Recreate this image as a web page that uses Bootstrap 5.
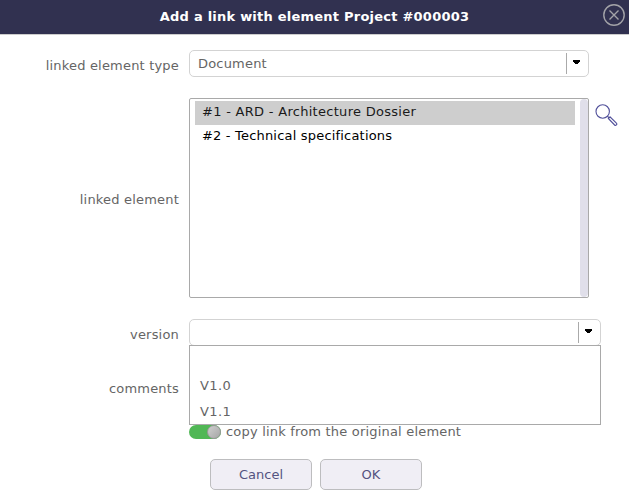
<!DOCTYPE html>
<html lang="en">
<head>
<meta charset="utf-8">
<meta name="viewport" content="width=device-width, initial-scale=1">
<title>Add a link</title>
<link href="https://cdn.jsdelivr.net/npm/bootstrap@5.3.0/dist/css/bootstrap.min.css" rel="stylesheet">
<style>
body{font-family:Verdana,"DejaVu Sans",sans-serif;font-size:13px;line-height:20px;letter-spacing:.19px;color:#656565;background:#fff;overflow:hidden}
.dlg-head{height:35px;background:#313150;border-bottom:1px solid #ccc;font-size:13px;letter-spacing:.23px}
.dlg-close{right:4px;top:4px;width:22px;height:22px}
.field-label{width:179px;margin-right:10px}
.row-first{margin-top:15px}
.row-next{margin-top:21px}
.label-list{padding-top:3px}
.combo{width:400px;height:27px;border:1px solid #d3d3d3;border-radius:5px;padding-left:8px}
.combo-wide{width:412px}
.combo-arrow{width:22px;height:21px;border-left:1px solid #aaa;padding-left:5px}
.combo-arrow svg{margin-top:7px}
.pick-list{width:400px;height:200px;border:1px solid #a9a9a9;border-radius:2px;color:#000;padding:0 0 0 5px}
.pick-items{padding-top:2px}
.pick-item{width:380px;height:24px;line-height:22px;padding-left:7px}
.pick-item.chosen{background:#cecece;color:#1a1a1a;letter-spacing:.29px}
.pick-bar{width:8px;background:#e0dfea;border-radius:4px}
.search-icon{margin:5px 0 0 5px}
.versions{left:0;top:26px;width:412px;height:80px;border:1px solid #a9a9a9;padding-left:10px;letter-spacing:.4px;z-index:2}
.versions div{height:26px;line-height:27px}
.comments-row{margin-top:33px;height:46px}
.copy-row{margin-left:189px;height:14px}
.copy-text{margin-left:5px}
.toggle{width:32px;height:14px;border-radius:7px;background:#50b755}
.toggle span{width:14px;height:14px;border-radius:50%;border:1px solid #999;background:linear-gradient(135deg,#cfcfcf,#a6a6a6)}
.actions{margin:20px 0 0 210px}
.dlg-btn{width:102px;height:31px;border:1px solid #bdbdbf;border-radius:5px;background:#f0eef5;color:#545381;font-size:13px;line-height:20px;letter-spacing:0;padding:0}
.dlg-btn:hover{background:#e5e3ee}
</style>
<script src="https://cdn.jsdelivr.net/npm/bootstrap@5.3.0/dist/js/bootstrap.bundle.min.js"></script>
</head>
<body>
<header class="dlg-head d-flex align-items-center justify-content-center text-white fw-bold position-relative">
  <span class="dlg-title">Add a link with element Project #000003</span>
  <svg class="dlg-close position-absolute" viewBox="0 0 22 22" fill="none" stroke="#a3a3a8"><circle cx="11" cy="11" r="10.2" stroke-width="1.4"/><path d="M6.5 6.5l9 9M15.500 6.500l-9 9" stroke-width="1.4"/></svg>
</header>
<main>
  <div class="d-flex row-first">
    <div class="field-label text-end pt-1 mt-1 lh-sm">linked element type</div>
    <div class="combo d-flex align-items-center justify-content-between"><span>Document</span>
      <span class="combo-arrow d-flex align-items-start"><svg width="9" height="5" viewBox="0 0 9 5" shape-rendering="crispEdges"><path d="M1 0h7v1h-7zM1 1h7v1h-7zM2 2h5v1h-5zM3 3h3v1h-3z"/></svg></span></div>
  </div>
  <div class="d-flex row-next">
    <div class="field-label label-list text-end align-self-center">linked element</div>
    <div class="pick-list d-flex justify-content-between">
      <div class="pick-items"><div class="pick-item chosen">#1 - ARD - Architecture Dossier</div><div class="pick-item">#2 - Technical specifications</div></div>
      <div class="pick-bar"></div>
    </div>
    <svg class="search-icon" width="24" height="24" viewBox="0 0 24 24" fill="none" stroke="#51509a" stroke-width="1.1"><circle cx="8.700" cy="8.500" r="6.700"/><path d="M13.400 13.200l1.300 1.300M16 13.800l-1.700 1.700 6.300 6.500q.9.800 1.800-.1t0-1.800z"/></svg>
  </div>
  <div class="d-flex row-next">
    <div class="field-label text-end pt-1 mt-1 lh-sm">version</div>
    <div class="position-relative">
      <div class="combo combo-wide d-flex align-items-center justify-content-end">
        <span class="combo-arrow d-flex align-items-start"><svg width="9" height="5" viewBox="0 0 9 5" shape-rendering="crispEdges"><path d="M1 0h7v1h-7zM1 1h7v1h-7zM2 2h5v1h-5zM3 3h3v1h-3z"/></svg></span></div>
      <div class="versions bg-white position-absolute"><div></div><div>V1.0</div><div>V1.1</div></div>
    </div>
  </div>
  <div class="d-flex comments-row"><div class="field-label text-end">comments</div></div>
  <div class="d-flex align-items-center copy-row">
    <span class="toggle d-flex justify-content-end"><span></span></span><span class="copy-text">copy link from the original element</span>
  </div>
  <div class="d-flex gap-2 actions"><button class="btn dlg-btn">Cancel</button><button class="btn dlg-btn">OK</button></div>
</main>
</body>
</html>
